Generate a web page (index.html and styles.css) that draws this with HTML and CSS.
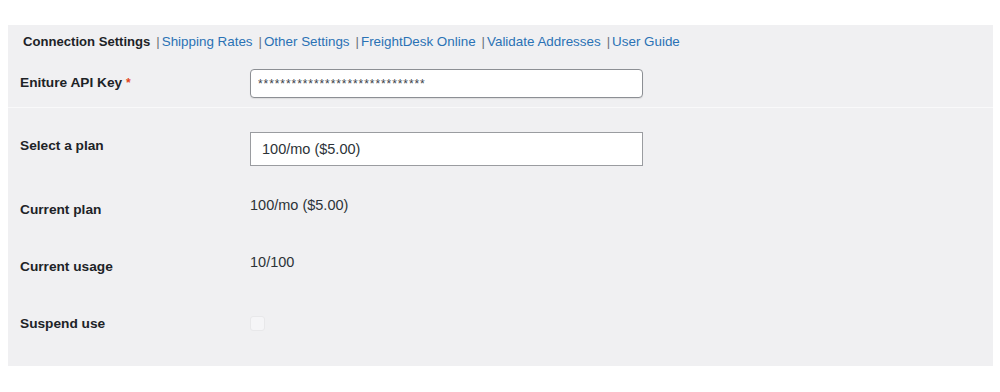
FILE: index.html
```html
<!DOCTYPE html>
<html lang="en">
<head>
<meta charset="utf-8">
<title>Connection Settings</title>
<link rel="stylesheet" href="styles.css">
</head>
<body>
<div class="panel">
  <div class="tabs"><span class="tab current">Connection Settings</span><span class="sep">|</span><a class="tab" href="#">Shipping Rates</a><span class="sep">|</span><a class="tab" href="#">Other Settings</a><span class="sep">|</span><a class="tab" href="#">FreightDesk Online</a><span class="sep">|</span><a class="tab" href="#">Validate Addresses</a><span class="sep">|</span><a class="tab" href="#">User Guide</a></div>

  <div class="section first">
    <div class="row">
      <div class="label">Eniture API Key <span class="req">*</span></div>
      <div class="field"><input class="text-input" type="text" value="******************************" readonly></div>
    </div>
  </div>

  <div class="section second">
    <div class="row">
      <div class="label">Select a plan</div>
      <div class="field"><div class="select">100/mo ($5.00)</div></div>
    </div>
    <div class="row">
      <div class="label">Current plan</div>
      <div class="field"><span class="value">100/mo ($5.00)</span></div>
    </div>
    <div class="row">
      <div class="label">Current usage</div>
      <div class="field"><span class="value">10/100</span></div>
    </div>
    <div class="row">
      <div class="label">Suspend use</div>
      <div class="field center"><span class="checkbox"></span></div>
    </div>
  </div>
</div>
</body>
</html>
```

FILE: styles.css
```css
html, body {
  margin: 0;
  padding: 0;
  background: #ffffff;
}

body {
  font-family: "Liberation Sans", Arial, sans-serif;
  color: #1d2327;
}

.panel {
  margin: 25px 7px 0 8px;
  background: #f0f0f2;
  padding: 0 12px 15px 12px;
  height: 341px;
  box-sizing: border-box;
}

.tabs {
  padding: 8px 0 4px 3px;
  line-height: 17px;
  font-size: 13.1px;
  white-space: nowrap;
}

.tab {
  color: #2a72b5;
  text-decoration: none;
  font-size: 13.4px;
}

.tab.current {
  color: #1d2327;
  font-weight: bold;
  font-size: 13.1px;
}

.sep {
  color: #6b7075;
  margin-left: 6px;
  margin-right: 2px;
}

.section.first {
  border-bottom: 1px solid #f9f9fa;
  margin: 0 -12px;
  padding: 0 12px;
  height: 53px;
}

.section.second {
  padding-top: 9px;
}

.row {
  display: grid;
  grid-template-columns: 230px 393px;
}

.label {
  padding: 20px 0;
  line-height: 17px;
  font-size: 13.7px;
  font-weight: bold;
  color: #1d2327;
}

.req {
  color: #e2461f;
  font-size: 12px;
}

.field {
  padding: 15px 0;
  line-height: 17px;
}

.field.center {
  padding: 21px 0 0 0;
}

.value {
  font-size: 14.5px;
  color: #2c3338;
}

.text-input {
  display: block;
  box-sizing: border-box;
  width: 393px;
  height: 29px;
  margin: 0;
  padding: 0 7px;
  border: 1px solid #8c8f94;
  border-radius: 4px;
  background: #ffffff;
  font-family: "Liberation Sans", Arial, sans-serif;
  font-size: 12px;
  letter-spacing: 0.92px;
  color: #3c434a;
  box-shadow: 0 1px 1px rgba(0, 0, 0, 0.08);
  outline: none;
}

.select {
  box-sizing: border-box;
  width: 393px;
  height: 34px;
  border: 1px solid #9a9ca0;
  background: #ffffff;
  padding: 0 11px;
  display: flex;
  align-items: center;
  font-size: 14.5px;
  color: #2c3338;
}

.checkbox {
  display: block;
  width: 15px;
  height: 15px;
  box-sizing: border-box;
  border: 1px solid #e8e8ea;
  border-radius: 3px;
  background: #f5f5f7;
}
```
